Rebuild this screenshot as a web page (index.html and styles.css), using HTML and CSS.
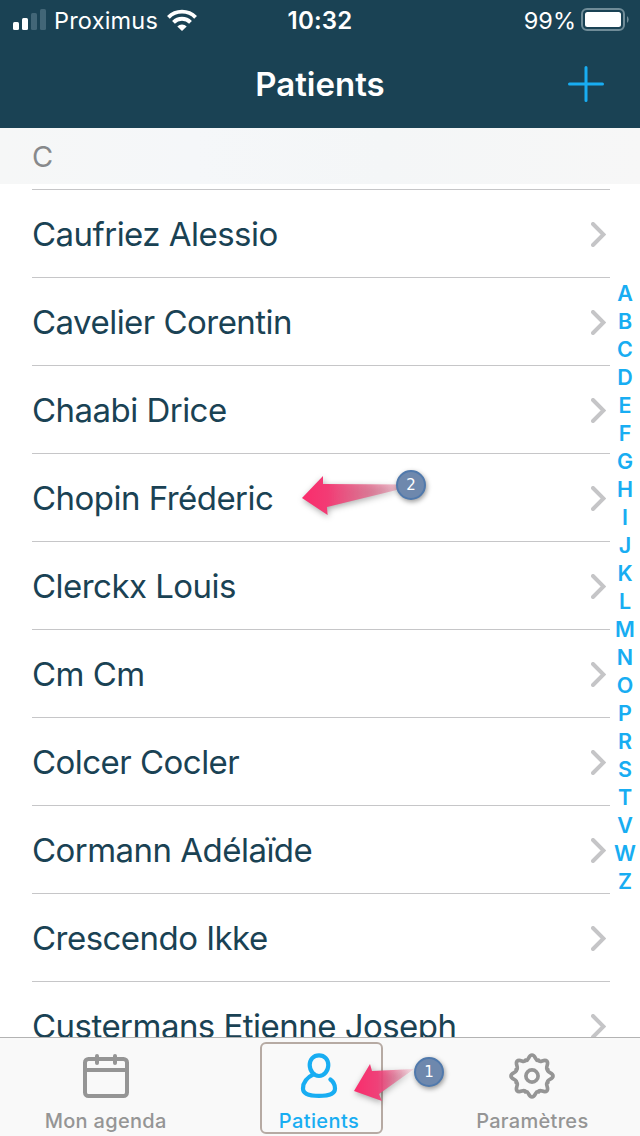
FILE: index.html
```html
<!DOCTYPE html>
<html lang="fr">
<head>
    <meta charset="UTF-8">
    <meta name="viewport" content="width=device-width, initial-scale=1.0">
    <title>Patients</title>
    <link rel="stylesheet" href="styles.css">
</head>
<body>
    <div class="phone">
        <header>
            <div class="status-bar">
                <div class="status-left">
                    <svg class="signal" width="34" height="22" viewBox="0 0 34 22">
                        <rect x="0" y="13" width="6" height="8" rx="1.5" fill="#fff"/>
                        <rect x="9" y="9" width="6" height="12" rx="1.5" fill="#fff"/>
                        <rect x="18" y="4" width="6" height="17" rx="1.5" fill="#426677"/>
                        <rect x="27" y="0" width="6" height="21" rx="1.5" fill="#426677"/>
                    </svg>
                    <span class="carrier">Proximus</span>
                    <svg class="wifi" width="30" height="22" viewBox="0 0 30 22">
                        <g fill="none" stroke="#fff" stroke-width="3.9">
                            <path d="M1.4 8.3a19.2 19.2 0 0 1 27.2 0"/>
                            <path d="M6.5 13.3a12 12 0 0 1 17 0"/>
                        </g>
                        <path d="M15 22l-4.7-4.5a6.6 6.6 0 0 1 9.4 0z" fill="#fff"/>
                    </svg>
                </div>
                <span class="clock">10:32</span>
                <div class="status-right">
                    <span class="percent">99%</span>
                    <svg class="battery" width="48" height="24" viewBox="0 0 48 24">
                        <rect x="1" y="1" width="42" height="21" rx="5" fill="none" stroke="#708c98" stroke-width="2"/>
                        <rect x="4" y="4" width="36" height="15" rx="2.5" fill="#fff"/>
                        <path d="M46 8a4.5 4.5 0 0 1 0 7z" fill="#708c98"/>
                    </svg>
                </div>
            </div>
            <div class="nav-bar">
                <h1>Patients</h1>
                <svg class="add" width="36" height="36" viewBox="0 0 36 36">
                    <path d="M18 1.5v33M1.5 18h33" stroke="#18adf2" stroke-width="3" stroke-linecap="round"/>
                </svg>
            </div>
        </header>

        <div class="section-title">C</div>

        <main>
            <ul class="patients">
                <li><span>Caufriez Alessio</span><svg class="chevron" viewBox="0 0 15 25"><path d="M2 2l10.500 10.500L2 23"/></svg></li>
                <li><span>Cavelier Corentin</span><svg class="chevron" viewBox="0 0 15 25"><path d="M2 2l10.500 10.500L2 23"/></svg></li>
                <li><span>Chaabi Drice</span><svg class="chevron" viewBox="0 0 15 25"><path d="M2 2l10.500 10.500L2 23"/></svg></li>
                <li><span>Chopin Fréderic</span><svg class="chevron" viewBox="0 0 15 25"><path d="M2 2l10.500 10.500L2 23"/></svg></li>
                <li><span>Clerckx Louis</span><svg class="chevron" viewBox="0 0 15 25"><path d="M2 2l10.500 10.500L2 23"/></svg></li>
                <li><span>Cm Cm</span><svg class="chevron" viewBox="0 0 15 25"><path d="M2 2l10.500 10.500L2 23"/></svg></li>
                <li><span>Colcer Cocler</span><svg class="chevron" viewBox="0 0 15 25"><path d="M2 2l10.500 10.500L2 23"/></svg></li>
                <li><span>Cormann Adélaïde</span><svg class="chevron" viewBox="0 0 15 25"><path d="M2 2l10.500 10.500L2 23"/></svg></li>
                <li><span>Crescendo Ikke</span><svg class="chevron" viewBox="0 0 15 25"><path d="M2 2l10.500 10.500L2 23"/></svg></li>
                <li><span>Custermans Etienne Joseph</span><svg class="chevron" viewBox="0 0 15 25"><path d="M2 2l10.500 10.500L2 23"/></svg></li>
            </ul>
            <nav class="index">
                <span>A</span><span>B</span><span>C</span><span>D</span><span>E</span><span>F</span>
                <span>G</span><span>H</span><span>I</span><span>J</span><span>K</span><span>L</span>
                <span>M</span><span>N</span><span>O</span><span>P</span><span>R</span><span>S</span>
                <span>T</span><span>V</span><span>W</span><span>Z</span>
            </nav>
        </main>

        <footer>
            <div class="tab">
                <svg width="48" height="48" viewBox="0 0 48 48" fill="none" stroke="#959595" stroke-width="4" stroke-linecap="round">
                    <rect x="3" y="7" width="42" height="37" rx="3.5"/>
                    <path d="M3 18h42" stroke-linecap="butt"/>
                    <path d="M15 4v7M33 4v7"/>
                </svg>
                <span>Mon agenda</span>
            </div>
            <div class="tab active">
                <svg width="48" height="48" viewBox="0 0 48 48" fill="none" stroke="#18adf2" stroke-width="4.2" stroke-linecap="round">
                    <path d="M24 3.300c-5.600 0-9.300 4.200-9.300 9.800S18.800 24 24 24s9.300-5.300 9.300-10.900-3.700-9.800-9.300-9.800z"/>
                    <path d="M18.800 22.200C12 25.500 8 30.500 8 36.500c0 5.800 6 7.400 16 7.400s16-1.600 16-7.400c0-3.800-1.400-6.700-4.600-9"/>
                </svg>
                <span>Patients</span>
            </div>
            <div class="tab">
                <svg width="48" height="48" viewBox="-24 -24 48 48" fill="none" stroke="#959595" stroke-width="3.7" stroke-linecap="round">
                    <circle r="6.1"/>
                    <path id="tooth" d="M-6.500-15.700C-3.200-14.400-3.800-21 0-21S3.200-14.400 6.500-15.700"/>
                    <use href="#tooth" transform="rotate(45)"/>
                    <use href="#tooth" transform="rotate(90)"/>
                    <use href="#tooth" transform="rotate(135)"/>
                    <use href="#tooth" transform="rotate(180)"/>
                    <use href="#tooth" transform="rotate(225)"/>
                    <use href="#tooth" transform="rotate(270)"/>
                    <use href="#tooth" transform="rotate(315)"/>
                </svg>
                <span>Paramètres</span>
            </div>
        </footer>

        <!-- numbered steps over the screen -->
        <div class="focus-box"></div>
        <svg class="arrow arrow-two" width="110" height="50" viewBox="0 0 110 50">
            <defs>
                <linearGradient id="fade2">
                    <stop offset="0" stop-color="#fa2c6c"/>
                    <stop offset="0.25" stop-color="#f23c75"/>
                    <stop offset="0.6" stop-color="#e2668a" stop-opacity="0.85"/>
                    <stop offset="1" stop-color="#e05c84" stop-opacity="0.2"/>
                </linearGradient>
            </defs>
            <path d="M2 28L23 6v8l84 .5v3L27 37l.6 8z" fill="url(#fade2)"/>
        </svg>
        <div class="step step-two">2</div>
        <svg class="arrow arrow-one" width="70" height="50" viewBox="0 0 70 50">
            <defs>
                <linearGradient id="fade1">
                    <stop offset="0" stop-color="#fa2c6c"/>
                    <stop offset="0.4" stop-color="#ee4279"/>
                    <stop offset="1" stop-color="#e4688c" stop-opacity="0.15"/>
                </linearGradient>
            </defs>
            <path d="M4 31L20 4l2 7 42-2-35 25 3 7z" fill="url(#fade1)"/>
        </svg>
        <div class="step step-one">1</div>
    </div>
</body>
</html>
```
FILE: styles.css
```css
* {
    margin: 0;
    padding: 0;
    box-sizing: border-box;
}

body {
    font-family: 'Inter', sans-serif;
    background: #fff;
    color: #1a4254;
}

svg {
    display: block;
    flex: none;
}

.phone {
    position: relative;
    width: 640px;
    height: 1136px;
    overflow: hidden;
    display: flex;
    flex-direction: column;
}

header {
    height: 128px;
    flex: none;
    background: #1a4254;
    color: #fff;
}

.status-bar {
    height: 40px;
    display: grid;
    grid-template-columns: 1fr auto 1fr;
    align-items: center;
    padding: 0 11px 0 13px;
    font-size: 24px;
}

.status-left, .status-right {
    display: flex;
    align-items: center;
}

.status-right {
    justify-content: flex-end;
}

.carrier {
    margin: 1px 9px 0 7px;
    font-size: 23.5px;
    letter-spacing: 0.2px;
}

.clock {
    font-weight: 600;
    margin: 1px 2px 0 0;
    letter-spacing: 0.2px;
}

.percent {
    margin: 1px 5px 0 0;
    font-size: 23.5px;
}

.nav-bar {
    height: 88px;
    display: grid;
    grid-template-columns: 1fr auto 1fr;
    align-items: center;
    padding-right: 36px;
}

h1 {
    grid-column: 2;
    margin-left: 36px;
    font-size: 33px;
    font-weight: 600;
}

.add {
    justify-self: end;
}

.section-title {
    height: 56px;
    flex: none;
    padding-left: 32px;
    line-height: 57px;
    font-size: 29px;
    color: #87898b;
    background: linear-gradient(90deg, #f6f7f7, #f5f7f9 30%, #f4f6f7 60%, #f7f7f7);
}

main {
    flex: 1;
    min-height: 0;
    display: flex;
    overflow: hidden;
    padding-top: 5px;
}

.patients {
    list-style: none;
    width: 578px;
    flex: none;
    margin-left: 32px;
    border-top: 1px solid #c6c6c8;
}

.patients li {
    height: 88px;
    display: flex;
    align-items: center;
    justify-content: space-between;
    padding: 1px 4px 0 0;
    border-bottom: 1px solid #c6c6c8;
    font-size: 33px;
    letter-spacing: -0.53px;
    white-space: nowrap;
}

.chevron {
    width: 15px;
    height: 25px;
    fill: none;
    stroke: #c5c5c7;
    stroke-width: 4;
    stroke-linecap: round;
}

.index {
    width: 30px;
    padding-top: 90px;
    display: flex;
    flex-direction: column;
    font-size: 21.5px;
    font-weight: 600;
    line-height: 28px;
    text-align: center;
    color: #18adf2;
}

footer {
    height: 99px;
    flex: none;
    display: grid;
    grid-template-columns: repeat(3, 1fr);
    border-top: 1px solid #b3b3b3;
    background: #f9f9f9;
}

.tab {
    display: flex;
    flex-direction: column;
    align-items: center;
    padding: 14px 2px 0 0;
    font-size: 20px;
    font-weight: 500;
    letter-spacing: 0.3px;
    color: #959595;
}

.tab span {
    margin-top: 9px;
    line-height: 24px;
}

.tab.active {
    letter-spacing: 0.4px;
    color: #18adf2;
}

.focus-box {
    position: absolute;
    left: 260px;
    top: 1042px;
    width: 123px;
    height: 92px;
    border: 2px solid #b6aaa3;
    border-radius: 6px;
}

.arrow {
    position: absolute;
    filter: drop-shadow(1px 2px 3px rgba(0, 0, 0, 0.35));
}

.arrow-two {
    left: 300px;
    top: 470px;
}

.arrow-one {
    left: 350px;
    top: 1060px;
}

.step {
    position: absolute;
    width: 30px;
    height: 30px;
    border: 2px solid #5079ac;
    border-radius: 50%;
    background: #6e88ad;
    box-shadow: 1px 2px 5px rgba(0, 0, 0, 0.4);
    color: #fff;
    font-family: 'DejaVu Sans', sans-serif;
    font-size: 15px;
    line-height: 26px;
    text-align: center;
}

.step-two {
    left: 396px;
    top: 470px;
}

.step-one {
    left: 414px;
    top: 1057px;
}
```
